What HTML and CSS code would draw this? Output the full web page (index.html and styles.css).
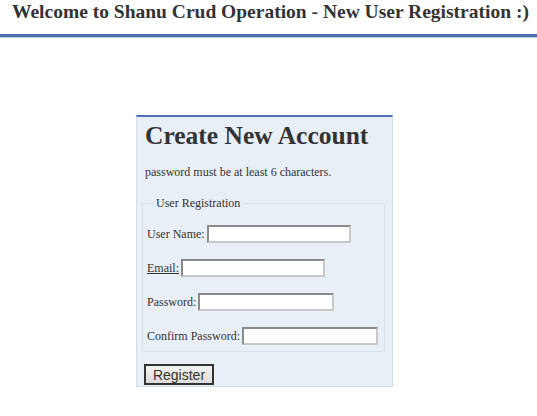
FILE: index.html
```html
<!DOCTYPE html>
<html lang="en">
<head>
    <meta charset="UTF-8">
    <meta name="viewport" content="width=device-width, initial-scale=1.0">
    <title>New User Registration</title>
    <link rel="stylesheet" href="styles.css">
</head>
<body>
    <div class="header">
        <h1>Welcome to Shanu Crud Operation - New User Registration :)</h1>
    </div>

    <div class="account-box">
        <h2>Create New Account</h2>
        <p class="hint">password must be at least 6 characters.</p>
        <fieldset>
            <legend>User Registration</legend>
            <div class="row">
                <label for="username">User Name:</label>
                <input type="text" id="username">
            </div>
            <div class="row">
                <label for="email" class="underlined">Email:</label>
                <input type="text" id="email">
            </div>
            <div class="row">
                <label for="password">Password:</label>
                <input type="password" id="password">
            </div>
            <div class="row">
                <label for="confirm">Confirm Password:</label>
                <input type="password" id="confirm">
            </div>
        </fieldset>
        <button type="button" class="register">Register</button>
    </div>
</body>
</html>
```

FILE: styles.css
```css
body {
    font-family: "Liberation Serif", "Times New Roman", serif;
    color: #333;
    margin: 0;
    background: #fff;
}
.header {
    padding: 1px 0 0 12px;
    height: 37px;
    border-bottom: 3px solid #4a6fae;
    box-shadow: 0 1px 0 #b9d3ef;
    box-sizing: border-box;
}
.header h1 {
    font-size: 19.5px;
    white-space: nowrap;
    margin: 0;
    color: #333;
}
.account-box {
    width: 243px;
    margin: 78px 0 0 136px;
    padding: 4px 7px 1px 5px;
    background: #e9eff6;
    border: 1px solid #d3dde8;
    border-top: 2px solid #4a72b4;
}
.account-box h2 {
    font-size: 25.5px;
    margin: 0 0 0 3px;
    color: #333;
}
.hint {
    font-size: 12px;
    margin: 14px 0 16px 3px;
}
fieldset {
    min-width: 0;
    border: 1px solid #d8e1ea;
    margin: 0;
    padding: 14px 4px 6px 4px;
    font-size: 12px;
}
legend {
    padding: 0 3px;
    margin-left: 6px;
}
.row {
    display: flex;
    align-items: center;
    height: 18px;
    margin-bottom: 16px;
    white-space: nowrap;
}
.row:last-child {
    margin-bottom: 0;
}
.row label {
    margin-right: 2px;
}
.underlined {
    text-decoration: underline;
}
.row input {
    flex-shrink: 0;
    box-sizing: border-box;
    width: 144px;
    height: 18px;
    padding: 1px 2px;
    border: 2px solid;
    border-color: #8a8a8a #c8c8c8 #c8c8c8 #8a8a8a;
    background: #fff;
}
.row input[type="password"] {
    width: 136px;
}
.register {
    margin: 12px 0 0 2px;
    width: 70px;
    height: 21px;
    font-family: "Liberation Sans", Arial, sans-serif;
    font-size: 14px;
    color: #333;
    background: linear-gradient(#f4f4f4, #dcdcdc);
    border: 2px solid #333;
    padding: 0;
}
```
